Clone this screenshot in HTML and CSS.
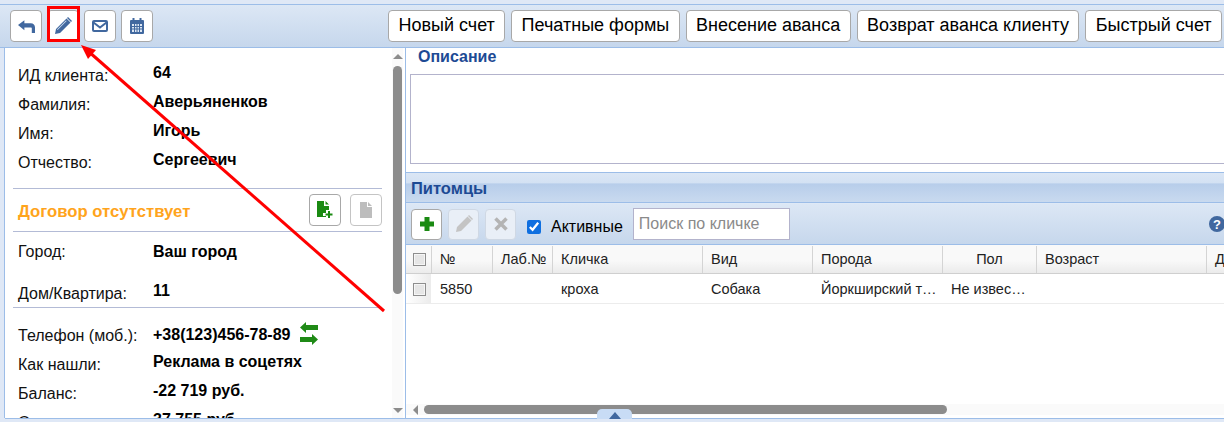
FILE: index.html
```html
<!DOCTYPE html>
<html lang="ru">
<head>
    <meta charset="UTF-8">
    <title>Клиент</title>
    <link rel="stylesheet" href="styles.css">
</head>
<body>
  <div class="toolbar">
    <div class="iconbtn"><svg width="17" height="13" viewBox="0 0 16 12"><path fill="#41689f" d="M0 4.500 6 0v3h6c2.500 0 4 1.500 4 4v5h-3V8c0-.7-.3-1-1-1H6v2.500z"/></svg></div>
    <div class="iconbtn"><svg width="18" height="18" viewBox="0 0 18 18"><path fill="#41689f" d="M12.500 1.500 16.500 5.500 6 16 1 17 2 12zM14 0l4 4-1 1-4-4z"/><path fill="#d7e3f2" d="M3 12.500 12 3.500l.6.6-9 9z"/></svg></div>
    <div class="iconbtn"><svg width="16" height="12" viewBox="0 0 16 12"><rect x="1" y="1" width="14" height="10" rx="1" fill="none" stroke="#41689f" stroke-width="2"/><path fill="none" stroke="#41689f" stroke-width="2" d="M1.500 2.500 8 7.500 14.500 2.500"/></svg></div>
    <div class="iconbtn"><svg width="14" height="16" viewBox="0 0 14 16"><path fill="#41689f" d="M2.500 0h2v2h5V0h2v2H13a1 1 0 0 1 1 1v12a1 1 0 0 1-1 1H1a1 1 0 0 1-1-1V3a1 1 0 0 1 1-1h1.500z"/><path fill="#dce6f3" d="M2 6h2v2H2zM5 6h1.500v2H5zM7.500 6H9v2H7.500zM10 6h2v2h-2zM2 9h2v1.500H2zM5 9h1.500v1.500H5zM7.500 9H9v1.500H7.500zM10 9h2v1.500h-2zM2 11.500h2V14H2zM5 11.500h1.500V14H5zM7.500 11.500H9V14H7.500zM10 11.500h2V14h-2z"/></svg></div>
    <div class="actions">
      <div class="textbtn">Новый счет</div>
      <div class="textbtn">Печатные формы</div>
      <div class="textbtn">Внесение аванса</div>
      <div class="textbtn">Возврат аванса клиенту</div>
      <div class="textbtn">Быстрый счет</div>
    </div>
  </div>

  <div class="main">
    <div class="client">
      <div class="clientinner">
        <div class="row"><div class="lbl">ИД клиента:</div><div class="val">64</div></div>
        <div class="row"><div class="lbl">Фамилия:</div><div class="val">Аверьяненков</div></div>
        <div class="row"><div class="lbl">Имя:</div><div class="val">Игорь</div></div>
        <div class="row"><div class="lbl">Отчество:</div><div class="val">Сергеевич</div></div>
        <div class="contract">
          <div class="contracttitle">Договор отсутствует</div>
          <div class="smallbtn"><svg width="16" height="18" viewBox="0 0 16 18"><path fill="#1a8a12" d="M0 0h7v5h5v4H9v3H6v3h3v1H0zM8.500 0 12 3.500H8.500z"/><path fill="#1a8a12" d="M11 10h2v2.500h2.500v2H13V17h-2v-2.500H8.500v-2H11z"/></svg></div>
          <div class="smallbtn"><svg width="12" height="16" viewBox="0 0 12 16"><path fill="#bdbdbd" d="M0 0h7v5h5v11H0zM8 0l4 4H8z"/></svg></div>
        </div>
        <div class="row city"><div class="lbl">Город:</div><div class="val">Ваш город</div></div>
        <div class="row house"><div class="lbl">Дом/Квартира:</div><div class="val">11</div></div>
        <div class="row phone">
          <div class="lbl">Телефон (моб.):</div>
          <div class="val">+38(123)456-78-89
            <svg class="swap" width="18" height="24" viewBox="0 0 18 24"><path fill="#1f8a16" d="M6 0v3h12v5H6v3L0 5.500zM12 12v3H0v5h12v3l6-5.500z"/></svg>
          </div>
        </div>
        <div class="row"><div class="lbl">Как нашли:</div><div class="val">Реклама в соцетях</div></div>
        <div class="row"><div class="lbl">Баланс:</div><div class="val">-22 719 руб.</div></div>
        <div class="row"><div class="lbl">Оплачено:</div><div class="val">37 755 руб.</div></div>
      </div>
      <div class="vscroll">
        <div class="arrowup"></div>
        <div class="vthumb"></div>
        <div class="arrowdown"></div>
      </div>
    </div>

    <div class="content">
      <div class="desctitle">Описание</div>
      <div class="descbox"></div>
      <div class="pets">
        <div class="petstitle">Питомцы</div>
        <div class="petsbar">
          <div class="petbtn"><svg width="16" height="16" viewBox="0 0 16 16"><path fill="#1a8a12" d="M5.500 1h5v4.500H15v5h-4.500V15h-5v-4.500H1v-5h4.500z"/></svg></div>
          <div class="petbtn off"><svg width="18" height="18" viewBox="0 0 18 18"><path fill="#c4c4c4" d="M12.500 1.500 16.500 5.500 6 16 1 17 2 12zM14 0l4 4-1 1-4-4z"/></svg></div>
          <div class="petbtn off"><svg width="14" height="14" viewBox="0 0 14 14"><path fill="none" stroke="#b4b4b4" stroke-width="3.500" d="M1.500 1.500l11 11M12.500 1.500l-11 11"/></svg></div>
          <label class="active"><input type="checkbox" checked> Активные</label>
          <input class="search" placeholder="Поиск по кличке">
          <svg class="help" width="16" height="16" viewBox="0 0 16 16"><circle cx="8" cy="8" r="8" fill="#41689f"/><text x="8" y="12.500" text-anchor="middle" class="helptext">?</text></svg>
        </div>
        <div class="thead">
          <div class="c0"><span class="box"></span></div>
          <div class="c1">№</div>
          <div class="c2">Лаб.№</div>
          <div class="c3">Кличка</div>
          <div class="c4">Вид</div>
          <div class="c5">Порода</div>
          <div class="c6 center">Пол</div>
          <div class="c7">Возраст</div>
          <div class="c8">Д</div>
        </div>
        <div class="tbody">
          <div class="c0"><span class="box"></span></div>
          <div class="c1">5850</div>
          <div class="c2"></div>
          <div class="c3">кроха</div>
          <div class="c4">Собака</div>
          <div class="c5"><span class="cut">Йоркширский терьер</span></div>
          <div class="c6"><span class="cut">Не известно</span></div>
          <div class="c7"></div>
        </div>
      </div>
      <div class="hscroll">
        <div class="arrowleft"></div>
        <div class="hthumb"></div>
      </div>
    </div>
  </div>
  <div class="bottom"></div>
  <div class="collapse"><div class="collapsearrow"></div></div>

  <!-- красная разметка поверх скриншота -->
  <div class="mark"></div>
  <svg class="arrow" width="400" height="320" viewBox="0 0 400 320">
    <line x1="384" y1="311" x2="88" y2="51" stroke="#f00" stroke-width="3"/>
    <path fill="#f00" d="M81 45 96 50 88 59z"/>
  </svg>
</body>
</html>
```

FILE: styles.css
```css
html,body{margin:0;padding:0;height:100%;overflow:hidden;}
body{
  position:relative;
  width:1224px;
  height:422px;
  background:#dfe8f6;
  font-family:"Liberation Sans",Arial,sans-serif;
  color:#000;
}
.toolbar{
  display:flex;
  align-items:center;
  gap:5px;
  height:42px;
  margin-top:4px;
  padding:0 2px 0 10px;
  background:linear-gradient(#dce7f5,#c6d7ec);
  border-top:1px solid #9cbde8;
  border-bottom:1px solid #9cbde8;
  box-sizing:content-box;
}
.iconbtn{
  display:flex;
  align-items:center;
  justify-content:center;
  width:32px;
  height:32px;
  box-sizing:border-box;
  background:#fff;
  border:1px solid #a8a8a8;
  border-radius:4px;
}
.actions{display:flex;gap:6px;margin-left:auto;}
.textbtn{
  height:32px;
  line-height:29px;
  box-sizing:border-box;
  padding:0 9.400px;
  background:#fff;
  border:1px solid #a8a8a8;
  border-radius:4px;
  font-size:18px;
  white-space:nowrap;
}
.main{
  display:flex;
  height:370px;
  background:#fff;
  border-left:1px solid #9cbde8;
  margin-left:4px;
}
.client{
  display:flex;
  width:401px;
  flex:none;
  overflow:hidden;
  border-right:1px solid #9cbde8;
  box-sizing:border-box;
}
.clientinner{width:369px;flex:none;margin-left:8px;padding-top:10px;overflow:hidden;}
.row{display:flex;height:29px;font-size:16px;padding-left:5px;line-height:18px;}
.lbl{width:135px;flex:none;padding-top:9px;color:#111;}
.val{font-weight:bold;padding-top:6px;white-space:nowrap;}
.contract{
  display:flex;
  align-items:center;
  gap:9px;
  height:42px;
  margin-top:14px;
  border-top:1px solid #b3bbd6;
  border-bottom:1px solid #b3bbd6;
}
.contracttitle{flex:1;font-size:16.700px;font-weight:bold;color:#ffa41c;padding:3px 0 0 5px;}
.smallbtn{
  display:flex;
  align-items:center;
  justify-content:center;
  width:32px;
  height:32px;
  box-sizing:border-box;
  background:#fff;
  border:1px solid #a8a8a8;
  border-radius:4px;
}
.smallbtn + .smallbtn{border-color:#c4c4c4;}
.city{height:42px;}
.city .lbl,.city .val{padding-top:11px;}
.house{height:33px;border-bottom:1px solid #b3bbd6;}
.house .lbl{padding-top:11px;}
.house .val{padding-top:8px;}
.phone{height:39px;}
.phone .lbl{padding-top:19px;}
.phone .val{padding-top:18px;}
.swap{vertical-align:-6px;margin-left:5px;margin-top:-8px;}
.vscroll{position:relative;width:11px;flex:none;margin-left:10px;background:#fafafa;}
.arrowup{
  position:absolute;top:6px;left:1px;
  border-left:5px solid transparent;border-right:5px solid transparent;
  border-bottom:5px solid #8c8c8c;
}
.arrowdown{
  position:absolute;top:360px;left:1px;
  border-left:5px solid transparent;border-right:5px solid transparent;
  border-top:5px solid #8c8c8c;
}
.vthumb{position:absolute;top:18px;left:1px;width:9px;height:228px;background:#8c8c8c;border-radius:5px;}
.content{position:relative;flex:1;min-width:0;overflow:hidden;}
.desctitle{font-size:16px;line-height:18px;font-weight:bold;color:#1d4a94;padding:0 0 0 12px;height:26px;box-sizing:border-box;}
.descbox{height:90px;margin-left:4px;box-sizing:border-box;border:1px solid #b3b3cc;border-right:none;}
.pets{margin-top:8px;border-top:1px solid #9cbde8;}
.petstitle{
  height:29px;
  line-height:30px;
  padding-left:5px;
  font-size:16.500px;
  font-weight:bold;
  color:#1d4a94;
  background:linear-gradient(#dbe6f5 0,#d3e1f3 35%,#b7cdea 37%,#c9daef 100%);
  border-bottom:1px solid #9cbde8;
}
.petsbar{
  display:flex;
  align-items:center;
  padding-left:5px;
  background:linear-gradient(#dce7f5,#c6d7ec);
  border-bottom:1px solid #9cbde8;
  border-top:1px solid #dfe9f6;
  box-sizing:border-box;
  height:42px;
}
.petbtn{
  display:flex;
  align-items:center;
  justify-content:center;
  width:31px;
  height:31px;
  margin-right:6px;
  box-sizing:border-box;
  background:#fff;
  border:1px solid #a8a8a8;
  border-radius:4px;
}
.petbtn.off{background:#e9eff7;border-color:#cfd8e4;}
.active{display:flex;align-items:center;font-size:16px;margin-left:5px;padding-top:5px;}
.active input{width:14px;height:14px;margin:0 10px 0 0;accent-color:#0f6fe0;}
.search{
  width:157px;
  height:32px;
  margin-left:10px;
  box-sizing:border-box;
  padding:0 5px;
  border:1px solid #b3b3cc;
  background:#fff;
  font:16px "Liberation Sans",Arial,sans-serif;
  outline:none;
}
.search::placeholder{color:#8a8a8a;}
.help{margin-left:auto;margin-right:-1px;flex:none;}
.helptext{font:bold 13px "Liberation Sans",Arial,sans-serif;fill:#fff;}
.thead,.tbody{display:flex;font-size:14.500px;color:#222;}
.thead{height:29px;line-height:26px;background:linear-gradient(#f9f9f9 55%,#ebebeb);border-bottom:1px solid #cfcfcf;box-sizing:border-box;}
.tbody{height:30px;line-height:30px;border-bottom:1px solid #ececec;box-sizing:border-box;}
.thead > div{box-sizing:border-box;border-right:1px solid #d4d4d4;padding-left:8px;margin-top:1px;}
.tbody > div{box-sizing:border-box;padding-left:8px;}
.c0{width:26px;flex:none;padding-left:7px !important;}
.tbody .c0{background:linear-gradient(90deg,#fff,#ececec);width:25px;border-right:1px solid #ececec;margin-right:1px;}
.c1{width:61px;flex:none;}
.c2{width:60px;flex:none;}
.c3{width:150px;flex:none;}
.c4{width:110px;flex:none;}
.c5{width:130px;flex:none;}
.c6{width:94px;flex:none;}
.c7{width:170px;flex:none;}
.c8{width:40px;flex:none;border-right:none !important;}
.center{text-align:center;padding-left:0 !important;}
.cut{display:block;width:119px;overflow:hidden;text-overflow:ellipsis;white-space:nowrap;}
.c6 .cut{width:80px;}
.box{
  display:inline-block;
  width:11px;
  height:11px;
  vertical-align:-2px;
  background:#e6e6e6;
  border:1px solid #8e8e8e;
  box-shadow:inset 0 0 0 1px #f6f6f6;
}
.hscroll{position:absolute;left:0;right:0;top:356px;height:11px;background:#fafafa;}
.arrowleft{
  position:absolute;left:7px;top:1px;
  border-top:5px solid transparent;border-bottom:5px solid transparent;
  border-right:5px solid #8c8c8c;
}
.hthumb{position:absolute;left:18px;top:1px;width:523px;height:9px;background:#8c8c8c;border-radius:5px;}
.bottom{height:3px;background:#dfe8f6;border-top:1px solid #9cbde8;margin-left:5px;}
.collapse{
  position:absolute;
  left:597px;
  top:409px;
  width:35px;
  height:10px;
  background:#c8dcf5;
  border-radius:5px 5px 0 0;
}
.collapsearrow{
  margin:3px auto 0;
  width:0;
  border-left:6px solid transparent;
  border-right:6px solid transparent;
  border-bottom:7px solid #41689f;
}
.mark{
  position:absolute;
  left:47px;
  top:6px;
  width:33px;
  height:36px;
  box-sizing:border-box;
  border:3px solid #f00;
}
.arrow{position:absolute;left:0;top:0;}
```
